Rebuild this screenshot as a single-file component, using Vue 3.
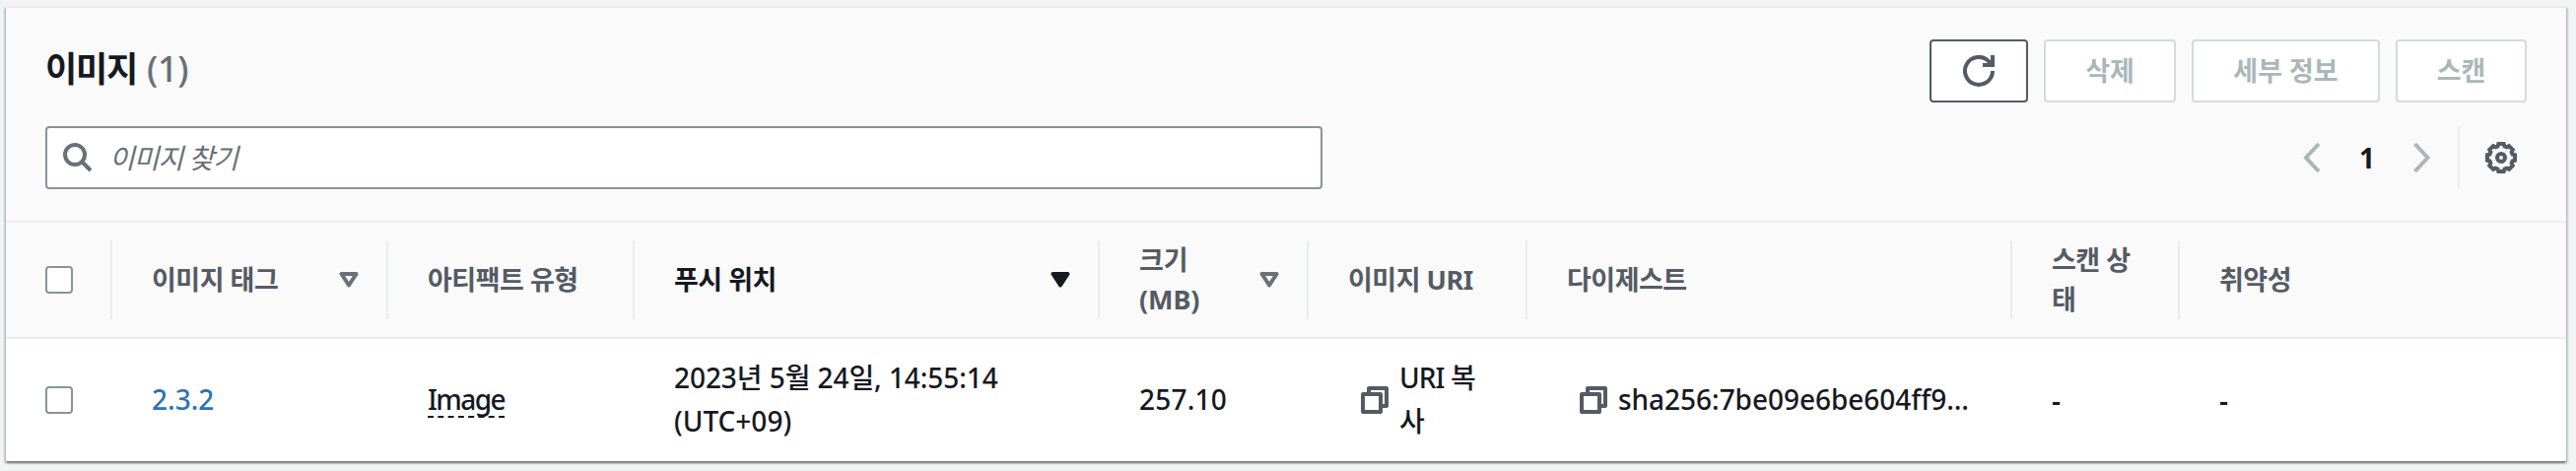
<script setup>
const columns = [
  { key: 'tag', lines: ['이미지 태그'], sort: 'open' },
  { key: 'artifact', lines: ['아티팩트 유형'] },
  { key: 'pushed', lines: ['푸시 위치'], sort: 'active' },
  { key: 'size', lines: ['크기', '(MB)'], sort: 'open' },
  { key: 'uri', lines: ['이미지 URI'] },
  { key: 'digest', lines: ['다이제스트'] },
  { key: 'scan', lines: ['스캔 상', '태'] },
  { key: 'vuln', lines: ['취약성'] },
]
</script>

<template>
  <div class="page">
    <section class="card">
      <header class="top">
        <div class="row">
          <h2 class="title">이미지 <span class="count">(1)</span></h2>
          <div class="actions">
            <button class="btn refresh" aria-label="새로 고침">
              <svg width="32" height="32" viewBox="0 0 32 32" fill="none" stroke="currentColor" stroke-width="4">
                <path d="M30 16a14 14 0 1 1-4-9.900L29 9" />
                <path d="M30 0v10H20" />
              </svg>
            </button>
            <button class="btn del" disabled>삭제</button>
            <button class="btn detail" disabled>세부 정보</button>
            <button class="btn scanbtn" disabled>스캔</button>
          </div>
        </div>
        <div class="row second">
          <div class="search">
            <svg width="30" height="30" viewBox="0 0 30 30" fill="none" stroke="currentColor" stroke-width="4">
              <circle cx="12" cy="12" r="10" />
              <path d="M19 19l9 9" />
            </svg>
            <span class="placeholder">이미지 찾기</span>
          </div>
          <div class="paging">
            <svg class="chev" width="20" height="32" viewBox="0 0 20 32" fill="none" stroke="currentColor" stroke-width="4"><path d="M17 2L4 16l13 14" /></svg>
            <span class="num">1</span>
            <svg class="chev" width="20" height="32" viewBox="0 0 20 32" fill="none" stroke="currentColor" stroke-width="4"><path d="M2.500 2l13 14-13 14" /></svg>
            <span class="sep"></span>
            <svg class="gear" width="32" height="32" viewBox="-16 -16 32 32" fill="none" stroke="currentColor" stroke-width="4">
              <path d="M-2.700-14H2.700L3.500-11.500 5.600-10.600 8-11.800 11.800-8 10.600-5.600 11.500-3.500 14-2.700V2.700L11.500 3.500 10.600 5.600 11.800 8 8 11.800 5.600 10.600 3.500 11.500 2.700 14H-2.700L-3.500 11.500-5.600 10.600-8 11.800-11.800 8-10.600 5.600-11.500 3.500-14 2.700V-2.700L-11.500-3.500-10.600-5.600-11.800-8-8-11.800-5.600-10.600-3.500-11.500z" />
              <circle r="4" />
            </svg>
          </div>
        </div>
      </header>

      <div class="grid head">
        <div class="th check"><span class="box"></span></div>
        <div v-for="c in columns" :key="c.key" class="th" :class="[c.key, { active: c.sort === 'active' }]">
          <span class="label"><span v-for="l in c.lines" :key="l" class="line">{{ l }}</span></span>
          <svg v-if="c.sort" class="sort" width="20" height="16" viewBox="0 0 20 16" stroke="currentColor" stroke-width="4" stroke-linejoin="round">
            <path d="M2.500 2h15L10 13.500z" :fill="c.sort === 'active' ? 'currentColor' : 'none'" />
          </svg>
        </div>
      </div>

      <div class="grid body">
        <div class="td check"><span class="box"></span></div>
        <div class="td"><a class="link">2.3.2</a></div>
        <div class="td"><span class="dashed">Image</span></div>
        <div class="td stack"><span class="date">2023년 5월 24일, 14:55:14</span><span class="utc">(UTC+09)</span></div>
        <div class="td"><span class="mb">257.10</span></div>
        <div class="td copycell">
          <svg class="copy" width="28" height="28" viewBox="0 0 28 28" fill="none" stroke="currentColor" stroke-width="4" stroke-linejoin="round"><path d="M2 8h18v18H2z" /><path d="M8 8V2h18v18h-6" /></svg>
          <span class="stack uri-text"><span>URI 복</span><span>사</span></span>
        </div>
        <div class="td copycell">
          <svg class="copy" width="28" height="28" viewBox="0 0 28 28" fill="none" stroke="currentColor" stroke-width="4" stroke-linejoin="round"><path d="M2 8h18v18H2z" /><path d="M8 8V2h18v18h-6" /></svg>
          <span class="sha">sha256:7be09e6be604ff9…</span>
        </div>
        <div class="td dash">-</div>
        <div class="td dash">-</div>
      </div>
    </section>
  </div>
</template>

<style>
body { background: #f2f4f4; }
</style>

<style scoped>
.page {
  box-sizing: border-box;
  width: 2614px;
  height: 478px;
  padding: 6px 10px 10px 6px;
  background: #f2f4f4;
  font-family: "Noto Sans", "Noto Sans CJK KR", sans-serif;
  font-size: 28px;
  color: #16191f;
}
.page * { box-sizing: border-box; }
.card {
  height: 462px;
  background: #fff;
  border-top: 2px solid #eaeded;
  box-shadow: 0 2px 2px 0 rgba(0, 28, 36, .4), 2px 2px 2px 0 rgba(0, 28, 36, .15), -2px 2px 2px 0 rgba(0, 28, 36, .15);
}
.top {
  height: 218px;
  padding: 32px 40px 0;
  background: #fafafa;
  border-bottom: 2px solid #eaeded;
}
.row { display: flex; justify-content: space-between; height: 64px; }
.second { margin-top: 24px; }
.title { margin: 0; font-size: 35px; line-height: 60px; font-weight: 700; letter-spacing: -1.2px; }
.count { margin-left: 2px; font-size: 36px; font-weight: 500; letter-spacing: -.2px; color: #687078; }
.actions { display: flex; }
.btn {
  display: flex; align-items: center; justify-content: center;
  height: 64px; padding: 0 0 3px; margin-left: 16px;
  border: 2px solid #545b64; border-radius: 4px;
  background: #fff; color: #545b64;
  font: 700 27px "Noto Sans", "Noto Sans CJK KR", sans-serif;
}
.btn:disabled { border-color: #d5dbdb; color: #aab7b8; }
.refresh { width: 100px; padding: 0; }
.del { width: 134px; }
.detail { width: 191px; }
.scanbtn { width: 133px; }
.search {
  display: flex; align-items: center;
  width: 1296px; height: 64px; padding-left: 16px;
  border: 2px solid #879596; border-radius: 4px;
  background: #fff; color: #687078;
}
.placeholder { margin: -3px 0 0 17px; font-size: 28px; font-style: italic; letter-spacing: -1px; }
.paging { display: flex; align-items: center; color: #aab7b8; }
.num { width: 92px; text-align: center; font-weight: 700; color: #16191f; }
.sep { width: 2px; height: 64px; margin: 0 26px; background: #eaeded; }
.gear { color: #545b64; margin-right: 10px; }
.grid { display: grid; grid-template-columns: 108px 280px 250px 472px 212px 222px 492px 170px 1fr; }
.head { height: 118px; padding: 18px 0; background: #fafafa; border-bottom: 2px solid #eaeded; }
.th {
  display: flex; align-items: center; justify-content: space-between;
  height: 80px; padding: 0 28px 0 40px;
  border-right: 2px solid #eaeded;
  font-size: 27px; font-weight: 700; line-height: 40px; letter-spacing: -.5px; color: #545b64;
}
.th:last-child { border-right: 0; }
.active { color: #16191f; }
.label { margin-top: -1px; }
.size .label { letter-spacing: -.1px; }
.line { display: block; white-space: nowrap; }
.sort { color: #687078; flex: none; }
.active .sort { color: #16191f; }
.box { display: block; width: 28px; height: 28px; border: 2px solid #879596; border-radius: 4px; background: #fff; }
.body { height: 124px; font-weight: 500; }
.td { display: flex; align-items: center; padding-left: 40px; line-height: 44px; white-space: nowrap; }
.td.stack { padding-bottom: 2px; }
.stack { display: flex; flex-direction: column; align-items: flex-start; justify-content: center; }
.link { color: #2e73b8; margin-top: -2px; }
.mb { margin-top: -2px; letter-spacing: .2px; }
.date { letter-spacing: -.07px; }
.utc { letter-spacing: 0; }
.dashed { line-height: 34px; border-bottom: 2px dashed #16191f; letter-spacing: -1.6px; }
.dash { font-weight: 600; }
.copycell { padding-left: 53px; }
.copy { color: #545b64; flex: none; margin-right: 11px; }
.uri-text { padding-bottom: 2px; letter-spacing: -.9px; }
.sha { margin-top: -2px; letter-spacing: -.03px; }
</style>
